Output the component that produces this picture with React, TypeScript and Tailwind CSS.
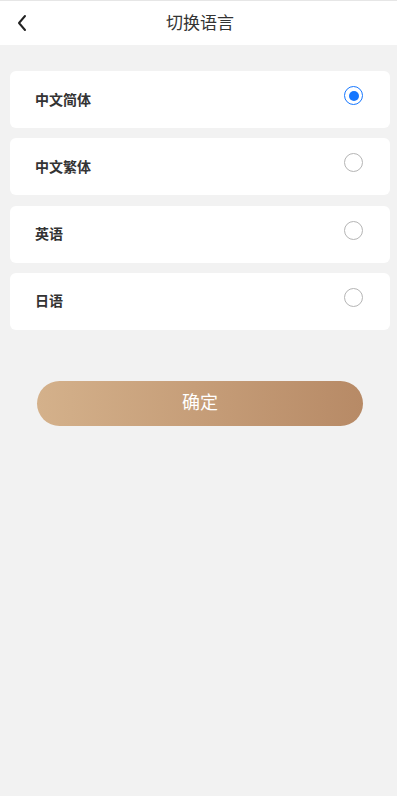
import { useState } from "react"

const langs = ["中文简体", "中文繁体", "英语", "日语"]

function Radio({ checked }: { checked: boolean }) {
    if (checked) {
        return (
            <span className="mb-[8px] flex h-[19px] w-[19px] items-center justify-center rounded-full border-[1.5px] border-[#1677ff]">
                <span className="h-[10px] w-[10px] rounded-full bg-[#1677ff]" />
            </span>
        )
    }
    return <span className="mb-[8px] h-[19px] w-[19px] rounded-full border border-[#b5b5b5]" />
}

export default function App() {
    const [selected, setSelected] = useState(0)

    return (
        <div className="h-screen w-full overflow-hidden bg-[#f2f2f2] font-['Noto_Sans_CJK_SC',sans-serif]">
            <div className="w-[400px]">
                <header className="relative flex h-[45px] items-center justify-center border-t border-[#e6e6e6] bg-white">
                    <button className="absolute left-[15px] top-[13px] text-[#222]">
                        <svg width="14" height="18" viewBox="0 0 14 18" fill="none">
                            <path d="M10 2 L4 9 L10 16" stroke="currentColor" strokeWidth="2" strokeLinecap="round" strokeLinejoin="round" />
                        </svg>
                    </button>
                    <h1 className="pb-[2px] text-[17px] text-[#333]">切换语言</h1>
                </header>

                <div className="mt-[26px] flex flex-col gap-[10.33px] px-[10px]">
                    {langs.map((name, i) => (
                        <div
                            key={name}
                            onClick={() => setSelected(i)}
                            className="flex h-[57px] items-center justify-between rounded-[6px] bg-white pl-[25px] pr-[27px]"
                        >
                            <span className="pb-[1px] text-[14px] font-bold text-[#333]">{name}</span>
                            <Radio checked={selected === i} />
                        </div>
                    ))}
                </div>

                <div className="mt-[51px] px-[37px]">
                    <button className="flex h-[45px] w-full items-center justify-center rounded-full bg-gradient-to-r from-[#d4b18b] to-[#b78a66] pb-[3px] text-[18px] text-white">
                        确定
                    </button>
                </div>
            </div>
        </div>
    )
}
